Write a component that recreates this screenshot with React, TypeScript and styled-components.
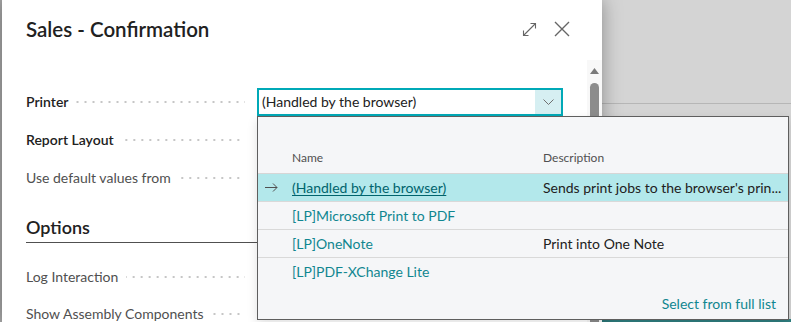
import React from "react";
import styled, { createGlobalStyle } from "styled-components";

const GlobalStyle = createGlobalStyle`
  html, body { margin: 0; padding: 0; }
  body { font-family: Lato, "Open Sans", sans-serif; background: #d4d4d4; }
  * { box-sizing: border-box; }
`;

const Screen = styled.div`
  display: flex;
  width: 791px;
  height: 322px;
  overflow: hidden;
  background: #d4d4d4;
`;

const PageEdge = styled.div`
  width: 2px;
  flex: none;
  background: #a8a8a8;
`;

const Dialog = styled.div`
  position: relative;
  z-index: 2;
  width: 600px;
  flex: none;
  display: flex;
  background: #ffffff;
  box-shadow: 0 0 18px rgba(0, 0, 0, 0.35);
`;

const DialogBody = styled.div`
  flex: 1;
  min-width: 0;
  padding: 15px 17px 0 24px;
`;

const Header = styled.div`
  display: flex;
  align-items: center;
  height: 28px;
`;

const Title = styled.h1`
  flex: 1;
  margin: 0;
  font-size: 20.5px;
  font-weight: 600;
  line-height: 28px;
  color: #212121;
`;

const IconButton = styled.span<{ $gap?: number }>`
  display: flex;
  color: #666666;
  margin-left: ${(p) => p.$gap ?? 0}px;
`;

const Form = styled.div<{ $top: number; $gap: number }>`
  display: flex;
  flex-direction: column;
  gap: ${(p) => p.$gap}px;
  margin-top: ${(p) => p.$top}px;
`;

const FieldRow = styled.div`
  display: flex;
  align-items: center;
  height: 28px;
`;

const Caption = styled.div`
  display: flex;
  align-items: center;
  width: 231px;
  flex: none;
  padding-right: 12px;
`;

const CaptionText = styled.span<{ $strong?: boolean }>`
  font-size: 14px;
  line-height: 28px;
  white-space: nowrap;
  color: ${(p) => (p.$strong ? "#212121" : "#505050")};
  font-weight: ${(p) => (p.$strong ? 600 : 400)};
`;

const Leader = styled.span`
  flex: 1;
  height: 2px;
  margin-left: 8px;
  background: linear-gradient(to right, #c6c6c6 2px, transparent 2px) right center / 8px 2px repeat-x;
`;

const ValueSlot = styled.div`
  position: relative;
  width: 306px;
  height: 28px;
  flex: none;
`;

const Select = styled.div`
  display: flex;
  height: 28px;
  border: 2px solid #00a9b7;
  background: #ffffff;
`;

const SelectText = styled.div`
  flex: 1;
  padding-left: 3px;
  font-size: 14px;
  line-height: 24px;
  color: #212121;
`;

const SelectButton = styled.div`
  width: 26px;
  display: flex;
  align-items: center;
  justify-content: center;
  background: #d6eff2;
  color: #707070;
`;

const Lookup = styled.div`
  position: absolute;
  top: 28px;
  left: 0;
  width: 532px;
  height: 204px;
  display: flex;
  flex-direction: column;
  background: #f5f6f8;
  border: 1px solid #5e5e5e;
  box-shadow: 0 4px 10px rgba(0, 0, 0, 0.12);
`;

const LookupGrid = styled.div`
  display: grid;
  grid-template-columns: 34px 251px minmax(0, 1fr);
`;

const LookupHeader = styled(LookupGrid)`
  height: 57px;
  align-items: end;
  padding-bottom: 7px;
  border-bottom: 1px solid #d6d6d6;
  font-size: 12px;
  line-height: 16px;
  color: #505050;
`;

const LookupRow = styled(LookupGrid)<{ $selected?: boolean; $last?: boolean }>`
  height: 28px;
  align-items: center;
  font-size: 14px;
  line-height: 27px;
  background: ${(p) => (p.$selected ? "#b3e8eb" : "transparent")};
  border-bottom: 1px solid ${(p) => (p.$last ? "transparent" : "#d9d9d9")};
`;

const Cell = styled.div`
  min-width: 0;
  white-space: nowrap;
  padding-right: 4px;
`;

const MarkerCell = styled.div`
  display: flex;
  align-items: center;
  padding-left: 7px;
  color: #505050;
`;

const NameLink = styled.span<{ $selected?: boolean }>`
  color: ${(p) => (p.$selected ? "#00646d" : "#108690")};
  text-decoration: ${(p) => (p.$selected ? "underline" : "none")};
  text-underline-offset: 2px;
`;

const DescText = styled(Cell)`
  color: #212121;
`;

const LookupFooter = styled.div`
  padding: 8px 12px 0 0;
  text-align: right;
  font-size: 14px;
  line-height: 20px;
  color: #108690;
`;

const SectionTitle = styled.h2`
  margin: 23px 0 0 0;
  padding-bottom: 3px;
  font-size: 18px;
  font-weight: 600;
  line-height: 24px;
  color: #212121;
  border-bottom: 1px solid #505050;
`;

const ScrollTrack = styled.div`
  width: 15px;
  flex: none;
  margin-top: 60px;
  padding-top: 8px;
  display: flex;
  flex-direction: column;
  align-items: center;
  background: #f8f8f8;
`;

const ScrollThumb = styled.div`
  flex: 1;
  width: 9px;
  margin-top: 9px;
  background: #8c8c8c;
  border-radius: 4.5px 4.5px 0 0;
`;

const Backdrop = styled.div`
  flex: 1;
  display: flex;
  flex-direction: column;
`;

const BackdropTop = styled.div`
  height: 104px;
  border-bottom: 1px solid #b6b6b6;
`;

const BackdropFill = styled.div`
  flex: 1;
`;

const BackdropBar = styled.div`
  height: 3px;
  background: #2f7f80;
`;

const ExpandIcon = () => (
  <svg width="15" height="15" viewBox="0 0 15 15" fill="none" stroke="currentColor" strokeWidth="1.1">
    <path d="M1.5 13.5 L13.5 1.5 M8.5 1.5 H13.5 V6.5 M1.5 8.5 V13.5 H6.5" />
  </svg>
);

const CloseIcon = () => (
  <svg width="16" height="16" viewBox="0 0 16 16" fill="none" stroke="currentColor" strokeWidth="1.4">
    <path d="M1 1 L15 15 M15 1 L1 15" />
  </svg>
);

const Chevron = () => (
  <svg width="11" height="6" viewBox="0 0 11 6" fill="none" stroke="currentColor" strokeWidth="1">
    <path d="M0.5 0.5 L5.5 5.5 L10.5 0.5" />
  </svg>
);

const RowArrow = () => (
  <svg width="13" height="9" viewBox="0 0 13 9" fill="none" stroke="currentColor" strokeWidth="1">
    <path d="M0 4.5 H12 M8 0.5 L12 4.5 L8 8.5" />
  </svg>
);

const UpArrow = () => (
  <svg width="9" height="6" viewBox="0 0 9 6">
    <path d="M4.5 0 L9 6 H0 Z" fill="#7a7a7a" />
  </svg>
);

type Printer = { name: string; description: string };

const printers: Printer[] = [
  { name: "(Handled by the browser)", description: "Sends print jobs to the browser's prin..." },
  { name: "[LP]Microsoft Print to PDF", description: "" },
  { name: "[LP]OneNote", description: "Print into One Note" },
  { name: "[LP]PDF-XChange Lite", description: "" },
];

const Field = ({
  label,
  strong,
  children,
}: {
  label: string;
  strong?: boolean;
  children?: React.ReactNode;
}) => (
  <FieldRow>
    <Caption>
      <CaptionText $strong={strong}>{label}</CaptionText>
      <Leader />
    </Caption>
    <ValueSlot>{children}</ValueSlot>
  </FieldRow>
);

export default function App() {
  return (
    <>
      <GlobalStyle />
      <Screen>
        <PageEdge />
        <Dialog>
          <DialogBody>
            <Header>
              <Title>Sales - Confirmation</Title>
              <IconButton>
                <ExpandIcon />
              </IconButton>
              <IconButton $gap={17}>
                <CloseIcon />
              </IconButton>
            </Header>

            <Form $top={45} $gap={10}>
              <Field label="Printer" strong>
                <Select>
                  <SelectText>(Handled by the browser)</SelectText>
                  <SelectButton>
                    <Chevron />
                  </SelectButton>
                </Select>
                <Lookup>
                  <LookupHeader>
                    <span />
                    <span>Name</span>
                    <span>Description</span>
                  </LookupHeader>
                  {printers.map((p, i) => (
                    <LookupRow key={p.name} $selected={i === 0} $last={i === printers.length - 1}>
                      <MarkerCell>{i === 0 && <RowArrow />}</MarkerCell>
                      <Cell>
                        <NameLink $selected={i === 0}>{p.name}</NameLink>
                      </Cell>
                      <DescText>{p.description}</DescText>
                    </LookupRow>
                  ))}
                  <LookupFooter>Select from full list</LookupFooter>
                </Lookup>
              </Field>
              <Field label="Report Layout" strong />
              <Field label="Use default values from" />
            </Form>

            <SectionTitle>Options</SectionTitle>

            <Form $top={20} $gap={9}>
              <Field label="Log Interaction" />
              <Field label="Show Assembly Components" />
            </Form>
          </DialogBody>
          <ScrollTrack>
            <UpArrow />
            <ScrollThumb />
          </ScrollTrack>
        </Dialog>
        <Backdrop>
          <BackdropTop />
          <BackdropFill />
          <BackdropBar />
        </Backdrop>
      </Screen>
    </>
  );
}
